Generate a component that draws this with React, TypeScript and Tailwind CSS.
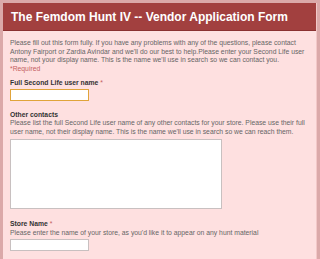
export default function App() {
  return (
    <div
      className="w-[320px] h-[259px] overflow-hidden bg-[#dba9a9] pl-[3px] pr-[3px] pt-[3px]"
      style={{ fontFamily: '"Liberation Sans", Arial, sans-serif' }}
    >
      <div className="h-full bg-[#fee0e0] border-r border-[#f3c8c8]">
        <div className="h-[28px] bg-[#a2403f] border-b border-[#8a3030] flex items-center pl-[8px]">
          <h1 className="text-white font-bold text-[12px] leading-none whitespace-nowrap">
            The Femdom Hunt IV -- Vendor Application Form
          </h1>
        </div>
        <div className="px-[7px] pt-[8px] text-[6.8px] leading-[8.5px] text-[#666]">
          <p className="whitespace-nowrap">
            Please fill out this form fully. If you have any problems with any of the questions, please contact
            <br />
            Antony Fairport or Zardia Avindar and we'll do our best to help.Please enter your Second Life user
            <br />
            name, not your display name. This is the name we'll use in search so we can contact you.
          </p>
          <p className="text-[#c4605f]">*Required</p>

          <div className="mt-[6px]">
            <div className="font-bold text-[#333]">
              Full Second Life user name <span className="font-normal text-[#c4605f]">*</span>
            </div>
            <div className="mt-[1px] w-[79px] h-[12px] bg-white border border-[#e0a43a]" />
          </div>

          <div className="mt-[10px]">
            <div className="font-bold text-[#333]">Other contacts</div>
            <p className="whitespace-nowrap">
              Please list the full Second Life user name of any other contacts for your store. Please use their full
              <br />
              user name, not their display name. This is the name we'll use in search so we can reach them.
            </p>
            <div className="mt-[3px] w-[212px] h-[70px] bg-white border border-[#c8c0c0]" />
          </div>

          <div className="mt-[11px]">
            <div className="font-bold text-[#333]">
              Store Name <span className="font-normal text-[#c4605f]">*</span>
            </div>
            <p className="whitespace-nowrap">
              Please enter the name of your store, as you'd like it to appear on any hunt material
            </p>
            <div className="mt-[2px] w-[79px] h-[12px] bg-white border border-[#c8c0c0]" />
          </div>
        </div>
      </div>
    </div>
  );
}
